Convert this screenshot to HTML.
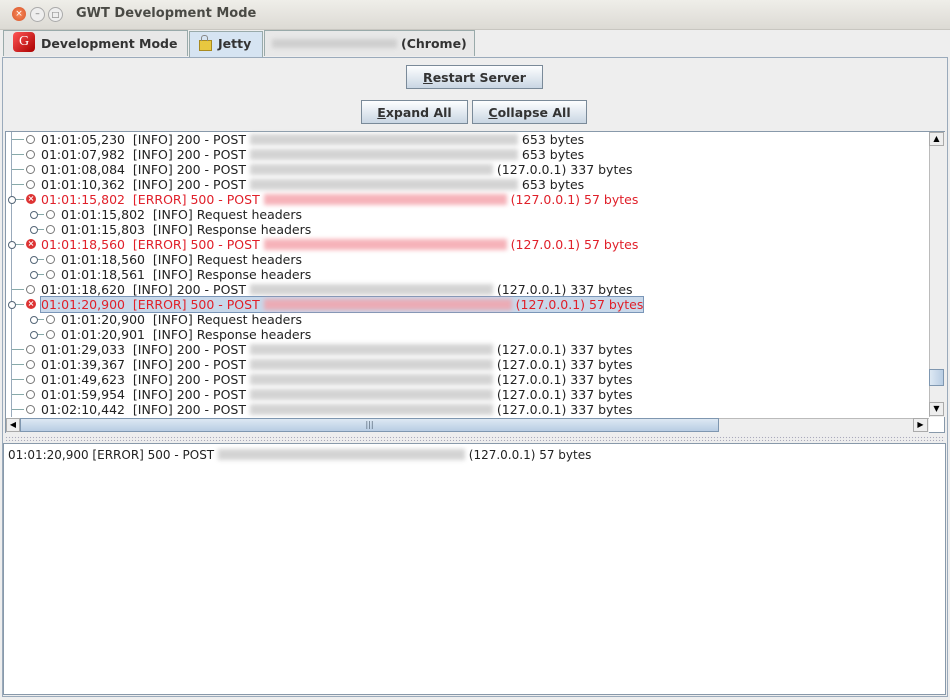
<!DOCTYPE html>
<html><head><style>
body{margin:0;width:950px;height:700px;overflow:hidden;background:#eeeeee;font-family:"DejaVu Sans",sans-serif;position:relative}
.abs{position:absolute}
.title{left:0;top:0;width:950px;height:29px;background:linear-gradient(#efeee9,#dcdad4);border-bottom:1px solid #c8c6c0}
.btn{position:absolute;height:24px;border:1px solid #7a8a99;background:linear-gradient(#fdfeff,#c9d6e3);font-size:12.5px;font-weight:bold;color:#333;text-align:center;line-height:24px;box-sizing:border-box}
.row{position:absolute;height:15px;font-size:12.5px;line-height:15px;white-space:nowrap;color:#222}
.err{color:#e0202a}
.blur{display:inline-block;height:11px;vertical-align:-1px;background:#c9c9c9;filter:blur(2px);opacity:.8}
.err .blur{background:#f4a0a8}
.circ{position:absolute;width:9px;height:9px;border:1px solid #777;border-radius:50%;background:#fff;box-sizing:border-box}
.x{position:absolute;width:10px;height:10px;border-radius:50%;background:#d33;color:#fff;font-size:8px;line-height:10px;text-align:center;font-weight:bold}
.h{position:absolute;height:1px;background:#8aa}
.v{position:absolute;width:1px;background:#9ab}
</style></head><body>
<div class="abs title"></div>
<div class="abs" style="left:12px;top:7px;width:14px;height:14px;border-radius:50%;background:radial-gradient(#f88a5a,#d8542a);color:#fff;font-size:9px;line-height:14px;text-align:center">×</div>
<div class="abs" style="left:30px;top:7px;width:13px;height:13px;border-radius:50%;border:1px solid #aaa;background:#eee;font-size:9px;line-height:13px;text-align:center;color:#666">–</div>
<div class="abs" style="left:48px;top:7px;width:13px;height:13px;border-radius:50%;border:1px solid #aaa;background:#eee;font-size:8px;line-height:13px;text-align:center;color:#666">□</div>
<div class="abs" style="left:76px;top:6px;font-size:13px;font-weight:bold;color:#4a4a45">GWT Development Mode</div>
<div class="abs" style="left:3px;top:30px;width:185px;height:26px;border:1px solid #9aa;border-bottom:none;background:#e8e8e8;box-sizing:border-box"></div>
<div class="abs" style="left:13px;top:32px;width:22px;height:20px;border-radius:4px;background:linear-gradient(135deg,#f55,#a00);color:#fff;font-family:'Liberation Serif',serif;font-size:14px;line-height:20px;text-align:center">G</div>
<div class="abs" style="left:41px;top:36px;font-size:12.5px;font-weight:bold;color:#333">Development Mode</div>
<div class="abs" style="left:189px;top:31px;width:74px;height:27px;border:1px solid #9aa;border-bottom:none;background:#d6e4f2;box-sizing:border-box"></div>
<div class="abs" style="left:199px;top:40px;width:11px;height:9px;background:#e8c840;border:1px solid #a88a20"></div>
<div class="abs" style="left:201px;top:35px;width:5px;height:5px;border:1px solid #888;border-bottom:none;border-radius:3px 3px 0 0"></div>
<div class="abs" style="left:218px;top:36px;font-size:12.5px;font-weight:bold;color:#333">Jetty</div>
<div class="abs" style="left:264px;top:30px;width:211px;height:26px;border:1px solid #9aa;border-bottom:none;background:#e8e8e8;box-sizing:border-box"></div>
<div class="abs blur" style="left:272px;top:39px;width:125px;height:9px"></div>
<div class="abs" style="left:401px;top:36px;font-size:12.5px;font-weight:bold;color:#333">(Chrome)</div>
<div class="abs" style="left:2px;top:57px;width:946px;height:640px;border:1px solid #9aaabb;box-sizing:border-box"></div>
<div class="btn" style="left:406px;top:65px;width:137px"><u>R</u>estart Server</div>
<div class="btn" style="left:361px;top:100px;width:107px"><u>E</u>xpand All</div>
<div class="btn" style="left:472px;top:100px;width:115px"><u>C</u>ollapse All</div>
<div class="abs" style="left:5px;top:131px;width:940px;height:302px;border:1px solid #8899aa;background:#fff;box-sizing:border-box"></div>
<div class="v" style="left:11px;top:132px;height:285px"></div>
<div id="rows"></div>
<div class="abs" style="left:929px;top:132px;width:15px;height:285px;background:#eee;border-left:1px solid #bbb"></div>
<div class="abs" style="left:929px;top:132px;width:15px;height:14px;border:1px solid #aaa;box-sizing:border-box;font-size:8px;text-align:center;line-height:12px">▲</div>
<div class="abs" style="left:929px;top:369px;width:15px;height:17px;background:linear-gradient(90deg,#dde8f3,#b8cde3);border:1px solid #7f97b0;box-sizing:border-box"></div>
<div class="abs" style="left:929px;top:402px;width:15px;height:14px;border:1px solid #aaa;box-sizing:border-box;font-size:8px;text-align:center;line-height:12px">▼</div>
<div class="abs" style="left:6px;top:418px;width:923px;height:14px;background:#eee;border-top:1px solid #bbb"></div>
<div class="abs" style="left:6px;top:418px;width:14px;height:14px;border:1px solid #aaa;box-sizing:border-box;font-size:8px;line-height:12px;text-align:center">◀</div>
<div class="abs" style="left:20px;top:418px;width:699px;height:14px;background:linear-gradient(#dde8f3,#b8cde3);border:1px solid #7f97b0;box-sizing:border-box;font-size:8px;line-height:12px;text-align:center;color:#567">|||</div>
<div class="abs" style="left:913px;top:418px;width:15px;height:14px;border:1px solid #aaa;box-sizing:border-box;font-size:8px;line-height:12px;text-align:center">▶</div>
<div class="abs" style="left:5px;top:436px;width:940px;height:5px;background-image:radial-gradient(#aab 0.7px,transparent 0.8px);background-size:3px 3px"></div>
<div class="abs" style="left:3px;top:443px;width:943px;height:252px;background:#fff;border:1px solid #8899aa;box-sizing:border-box"></div>
<div class="row" style="left:8px;top:448px;font-size:12px">01:01:20,900 [ERROR] 500 - POST <span class="blur" style="width:247px"></span> (127.0.0.1) 57 bytes</div>
<script>
var R=[
[0,0,"01:01:05,230","[INFO] 200 - POST",268,"653 bytes"],
[0,0,"01:01:07,982","[INFO] 200 - POST",268,"653 bytes"],
[0,0,"01:01:08,084","[INFO] 200 - POST",243,"(127.0.0.1) 337 bytes"],
[0,0,"01:01:10,362","[INFO] 200 - POST",268,"653 bytes"],
[0,1,"01:01:15,802","[ERROR] 500 - POST",243,"(127.0.0.1) 57 bytes"],
[1,0,"01:01:15,802","[INFO] Request headers"],
[1,0,"01:01:15,803","[INFO] Response headers"],
[0,1,"01:01:18,560","[ERROR] 500 - POST",243,"(127.0.0.1) 57 bytes"],
[1,0,"01:01:18,560","[INFO] Request headers"],
[1,0,"01:01:18,561","[INFO] Response headers"],
[0,0,"01:01:18,620","[INFO] 200 - POST",243,"(127.0.0.1) 337 bytes"],
[0,2,"01:01:20,900","[ERROR] 500 - POST",248,"(127.0.0.1) 57 bytes"],
[1,0,"01:01:20,900","[INFO] Request headers"],
[1,0,"01:01:20,901","[INFO] Response headers"],
[0,0,"01:01:29,033","[INFO] 200 - POST",243,"(127.0.0.1) 337 bytes"],
[0,0,"01:01:39,367","[INFO] 200 - POST",243,"(127.0.0.1) 337 bytes"],
[0,0,"01:01:49,623","[INFO] 200 - POST",243,"(127.0.0.1) 337 bytes"],
[0,0,"01:01:59,954","[INFO] 200 - POST",243,"(127.0.0.1) 337 bytes"],
[0,0,"01:02:10,442","[INFO] 200 - POST",243,"(127.0.0.1) 337 bytes"]];
var h="";
R.forEach(function(r,i){var y=132+i*15,c=y+7;
if(r[0]==0){h+='<div class="h" style="left:12px;top:'+c+'px;width:12px"></div>';
 if(r[1])h+='<div class="x" style="left:26px;top:'+(c-5)+'px">×</div><div class="abs" style="left:8px;top:'+(c-3)+'px;width:6px;height:6px;border:1px solid #567;border-radius:50%;background:#fff"></div>';
 else h+='<div class="circ" style="left:26px;top:'+(c-4)+'px"></div>';}
else{h+='<div class="h" style="left:32px;top:'+c+'px;width:12px"></div><div class="abs" style="left:30px;top:'+(c-3)+'px;width:6px;height:6px;border:1px solid #567;border-radius:50%;background:#fff"></div><div class="circ" style="left:46px;top:'+(c-4)+'px"></div>';}
var x=r[0]?61:41,cls=r[1]?"row err":"row",st="";
if(r[1]==2)st="background:#c8d8ea;outline:1px solid #7a96b8;";
var t=r[2]+"&nbsp; "+r[3];
if(r[4])t+=' <span class="blur" style="width:'+r[4]+'px"></span> '+r[5];
h+='<div class="'+cls+'" style="left:'+x+'px;top:'+y+'px;'+st+'">'+t+'</div>';});
document.getElementById("rows").innerHTML=h;
</script>
</body></html>
